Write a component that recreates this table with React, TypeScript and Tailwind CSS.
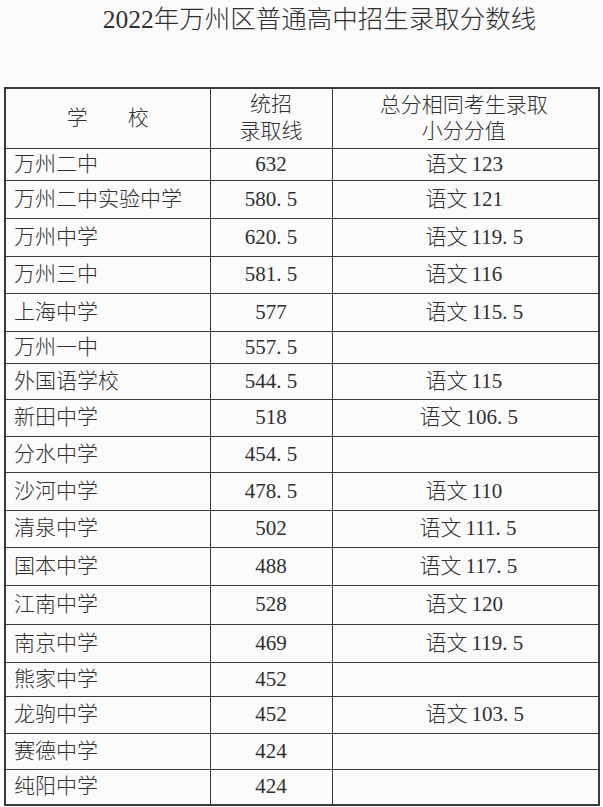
import React from "react";

type Row = { name: string; score: string; tie: string; h: number; shift?: boolean };

const rows: Row[] = [
  { name: "万州二中", score: "632", tie: "123", h: 32 },
  { name: "万州二中实验中学", score: "580.5", tie: "121", h: 38 },
  { name: "万州中学", score: "620.5", tie: "119.5", h: 38 },
  { name: "万州三中", score: "581.5", tie: "116", h: 37 },
  { name: "上海中学", score: "577", tie: "115.5", h: 38 },
  { name: "万州一中", score: "557.5", tie: "", h: 32 },
  { name: "外国语学校", score: "544.5", tie: "115", h: 36 },
  { name: "新田中学", score: "518", tie: "106.5", h: 37, shift: true },
  { name: "分水中学", score: "454.5", tie: "", h: 36 },
  { name: "沙河中学", score: "478.5", tie: "110", h: 38 },
  { name: "清泉中学", score: "502", tie: "111.5", h: 37, shift: true },
  { name: "国本中学", score: "488", tie: "117.5", h: 38, shift: true },
  { name: "江南中学", score: "528", tie: "120", h: 39 },
  { name: "南京中学", score: "469", tie: "119.5", h: 38 },
  { name: "熊家中学", score: "452", tie: "", h: 34 },
  { name: "龙驹中学", score: "452", tie: "103.5", h: 37 },
  { name: "赛德中学", score: "424", tie: "", h: 36 },
  { name: "纯阳中学", score: "424", tie: "", h: 36 },
];

function Num({ v }: { v: string }) {
  const parts = v.split(".");
  if (parts.length === 1) return <span>{v}</span>;
  return (
    <span>
      {parts[0]}
      <span className="mr-[0.25em]">.</span>
      {parts[1]}
    </span>
  );
}

const font = { fontFamily: '"Liberation Serif", "Noto Sans CJK SC", serif' };

export default function App() {
  return (
    <div
      className="w-[603px] h-[807px] bg-[#fbfbfb] text-[#303030] overflow-hidden"
      style={font}
    >
      <div className="h-[87px] pt-[3px] pl-[36px] text-center text-[25.5px] leading-[34px] font-light">
        2022年万州区普通高中招生录取分数线
      </div>
      <table className="ml-[4px] w-[594px] table-fixed border-collapse border-2 border-[#3a3a3a]">
        <colgroup>
          <col className="w-[205px]" />
          <col className="w-[122px]" />
          <col className="w-[267px]" />
        </colgroup>
        <thead>
          <tr className="h-[60px]">
            <th className="border-[1.5px] border-[#3a3a3a] font-light text-[21px] text-center">
              <span className="inline-flex gap-[40px]">
                <span>学</span>
                <span>校</span>
              </span>
            </th>
            <th className="border-[1.5px] border-[#3a3a3a] font-light text-[21px] leading-[27px] text-center">
              <div>统招</div>
              <div>录取线</div>
            </th>
            <th className="border-[1.5px] border-[#3a3a3a] font-light text-[21px] leading-[26px] text-center">
              <div className="pr-[3px]">总分相同考生录取</div>
              <div className="pr-[3px]">小分分值</div>
            </th>
          </tr>
        </thead>
        <tbody>
          {rows.map((r, i) => (
            <tr key={i} style={{ height: r.h }}>
              <td className="border-[1.5px] border-[#3a3a3a] pl-[8px] text-[21px] font-light leading-none whitespace-nowrap">
                {r.name}
              </td>
              <td className="border-[1.5px] border-[#3a3a3a] text-center text-[21px] leading-none">
                <Num v={r.score} />
              </td>
              <td
                className={
                  r.shift
                    ? "border-[1.5px] border-[#3a3a3a] pl-[87px] text-[21px] leading-none whitespace-nowrap"
                    : "border-[1.5px] border-[#3a3a3a] pl-[93px] text-[21px] leading-none whitespace-nowrap"
                }
              >
                {r.tie && (
                  <span>
                    <span className="font-light">语文</span>
                    <span className="ml-[4px]">
                      <Num v={r.tie} />
                    </span>
                  </span>
                )}
              </td>
            </tr>
          ))}
        </tbody>
      </table>
    </div>
  );
}
